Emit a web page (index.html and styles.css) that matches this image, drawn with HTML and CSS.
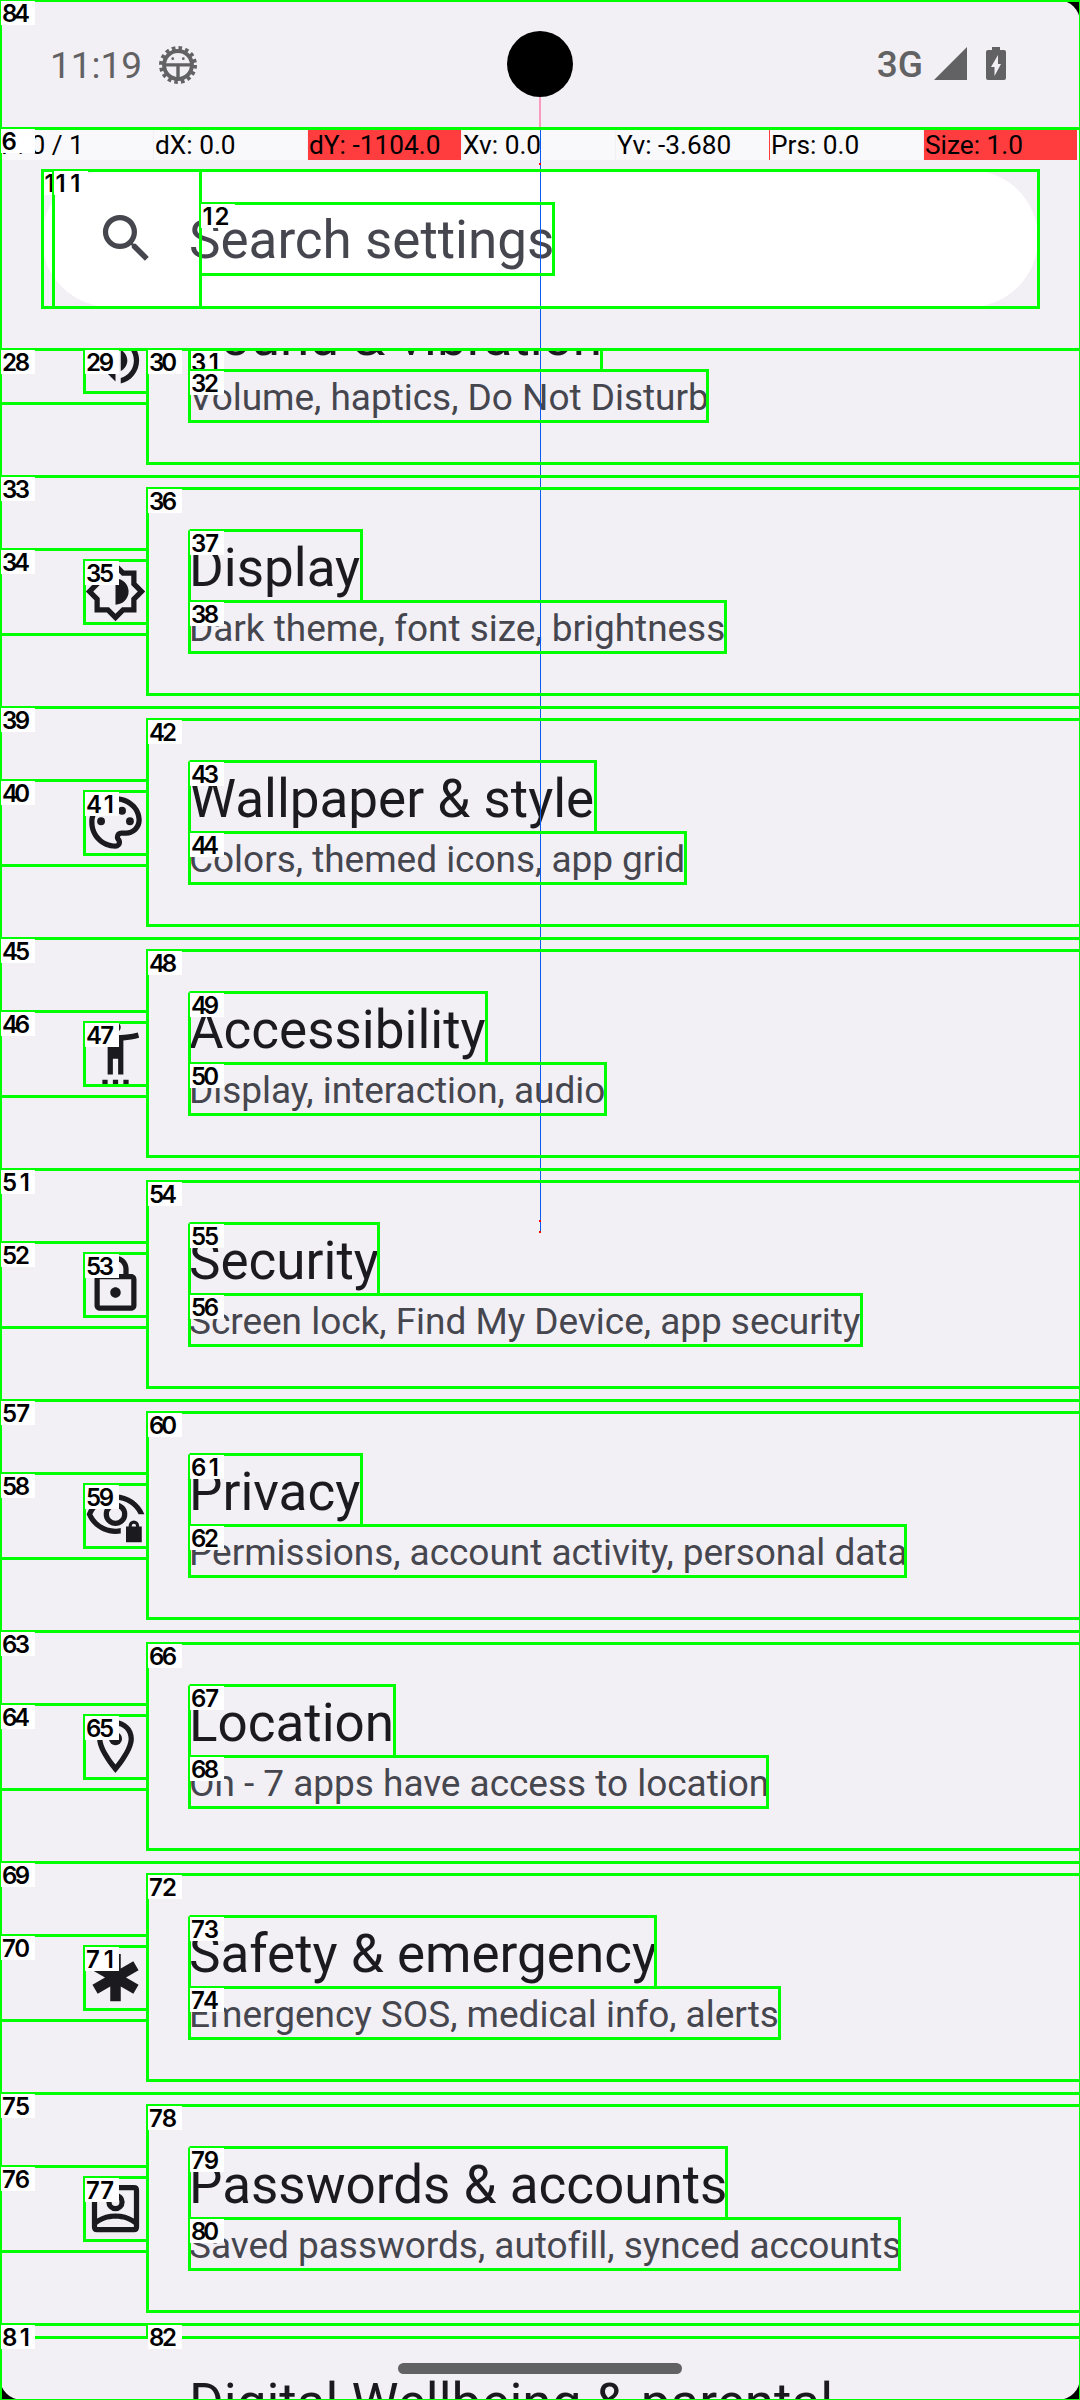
FILE: index.html
```html
<!DOCTYPE html>
<html lang="en">
<head>
<meta charset="utf-8">
<title>Settings</title>
<link rel="stylesheet" href="styles.css">
</head>
<body>
<div class="screen">
  <header class="status">
    <div class="status-left">
      <span class="clock">11:19</span>
      <svg class="bug" viewBox="-18 -18 36 36">
        <circle r="13.2" fill="none" stroke="#626264" stroke-width="3.8"/>
        <circle r="16.2" fill="none" stroke="#626264" stroke-width="3.6" stroke-dasharray="3.4 2.96"/>
        <path d="M-13-1.6h26v3h-11.4v12h-3.2v-12H-13z" fill="#626264"/>
        <circle cx="-5" cy="-6" r="1.3" fill="#626264"/><circle cx="5" cy="-6" r="1.3" fill="#626264"/>
      </svg>
    </div>
    <div class="status-right">
      <span class="network">3G</span>
      <svg class="signal" viewBox="0 0 33 33"><path d="M33 0v33H0z"/></svg>
      <svg class="battery" viewBox="0 0 20 33"><path fill-rule="evenodd" d="M6 0h8v3h4q2 0 2 2v26q0 2-2 2H2q-2 0-2-2V5q0-2 2-2h4zM12 8L5 20h3.5v9L15 17h-3z"/></svg>
    </div>
  </header>

  <div class="pointer-bar">
    <span>P: 0 / 1</span><span>dX: 0.0</span><span class="hot">dY: -1104.0</span><span>Xv: 0.0</span><span>Yv: -3.680</span><span class="edge">Prs: 0.0</span><span class="hot">Size: 1.0</span>
  </div>

  <div class="search">
    <svg class="icon" viewBox="0 0 24 24"><path d="M15.5 14h-.79l-.28-.27A6.47 6.47 0 0016 9.5 6.5 6.5 0 109.5 16c1.61 0 3.09-.59 4.23-1.57l.27.28v.79l5 4.99L20.49 19l-4.99-5zm-6 0C7.01 14 5 11.99 5 9.5S7.01 5 9.5 5 14 7.01 14 9.5 11.99 14 9.5 14z"/></svg>
    <span class="hint">Search settings</span>
  </div>

  <main class="list">
    <div class="row">
      <svg class="icon" viewBox="0 0 24 24"><path d="M3 9v6h4l5 5V4L7 9H3zm7-.17v6.34L7.83 13H5v-2h2.83L10 8.83zM16.5 12c0-1.77-1.02-3.29-2.5-4.03v8.05c1.48-.73 2.5-2.25 2.5-4.02zM14 3.23v2.06c2.89.86 5 3.54 5 6.71s-2.11 5.85-5 6.71v2.06c4.01-.91 7-4.49 7-8.77s-2.99-7.86-7-8.77z"/></svg>
      <div class="text"><div class="title">Sound &amp; vibration</div><div class="summary">Volume, haptics, Do Not Disturb</div></div>
    </div>
    <div class="row">
      <svg class="icon" viewBox="0 0 24 24"><path d="M20 8.69V4h-4.69L12 .69 8.69 4H4v4.69L.69 12 4 15.31V20h4.69L12 23.31 15.31 20H20v-4.69L23.31 12 20 8.69zm-2 5.79V18h-3.52L12 20.48 9.52 18H6v-3.52L3.52 12 6 9.52V6h3.52L12 3.52 14.48 6H18v3.52L20.48 12 18 14.48zM12 7v10c2.76 0 5-2.24 5-5s-2.24-5-5-5z"/></svg>
      <div class="text"><div class="title">Display</div><div class="summary">Dark theme, font size, brightness</div></div>
    </div>
    <div class="row">
      <svg class="icon" viewBox="0 0 24 24"><path d="M12 22C6.49 22 2 17.51 2 12S6.49 2 12 2s10 4.04 10 9c0 3.31-2.69 6-6 6h-1.77c-.28 0-.5.22-.5.5 0 .12.05.23.13.33.41.47.64 1.06.64 1.67A2.5 2.5 0 0112 22zm0-18c-4.41 0-8 3.59-8 8s3.59 8 8 8c.28 0 .5-.22.5-.5a.54.54 0 00-.14-.35c-.41-.46-.63-1.05-.63-1.65a2.5 2.5 0 012.5-2.5H16c2.21 0 4-1.79 4-4 0-3.86-3.59-7-8-7z"/><circle cx="6.5" cy="11.5" r="1.5"/><circle cx="9.5" cy="7.5" r="1.5"/><circle cx="14.5" cy="7.5" r="1.5"/><circle cx="17.5" cy="11.5" r="1.5"/></svg>
      <div class="text"><div class="title">Wallpaper &amp; style</div><div class="summary">Colors, themed icons, app grid</div></div>
    </div>
    <div class="row">
      <svg class="icon" viewBox="0 0 24 24"><path d="M20.5 4c-2.61.7-5.67 1-8.5 1s-5.89-.3-8.5-1L3 6c1.86.5 4 .83 6 1v13h2v-6h2v6h2V7c2-.17 4.14-.5 6-1l-.5-2zM12 4a2 2 0 100-4 2 2 0 000 4zM7 22h2v2H7zM11 22h2v2h-2zM15 22h2v2h-2z"/></svg>
      <div class="text"><div class="title">Accessibility</div><div class="summary">Display, interaction, audio</div></div>
    </div>
    <div class="row">
      <svg class="icon" viewBox="0 0 24 24"><path d="M18 8h-1V6c0-2.76-2.24-5-5-5S7 3.24 7 6v2H6c-1.1 0-2 .9-2 2v10c0 1.1.9 2 2 2h12c1.1 0 2-.9 2-2V10c0-1.1-.9-2-2-2zM9 6c0-1.66 1.34-3 3-3s3 1.34 3 3v2H9V6zm9 14H6V10h12v10zm-6-3c1.1 0 2-.9 2-2s-.9-2-2-2-2 .9-2 2 .9 2 2 2z"/></svg>
      <div class="text"><div class="title">Security</div><div class="summary">Screen lock, Find My Device, app security</div></div>
    </div>
    <div class="row">
      <svg class="icon" viewBox="0 0 24 24"><path fill-rule="evenodd" d="M12 4C7 4 2.73 7.11 1 11.5 2.73 15.89 7 19 12 19c.7 0 1.37-.06 2-.18v-2.02c-.64.13-1.3.2-2 .2-3.79 0-7.17-2.13-8.82-5.5C4.83 8.13 8.21 6 12 6s7.17 2.13 8.82 5.5H23C21.27 7.11 17 4 12 4zM12 7a4.5 4.5 0 100 9 4.5 4.5 0 000-9zm0 2a2.5 2.5 0 110 5 2.5 2.5 0 010-5zM16 16.2h1V16a2 2.1 0 014 0v.2h1v6h-6zm2.2 0h1.6V16a.8.9 0 00-1.6 0z"/></svg>
      <div class="text"><div class="title">Privacy</div><div class="summary">Permissions, account activity, personal data</div></div>
    </div>
    <div class="row">
      <svg class="icon" viewBox="0 0 24 24"><path d="M12 2C8.13 2 5 5.13 5 9c0 5.25 7 13 7 13s7-7.75 7-13c0-3.87-3.13-7-7-7zM7 9c0-2.76 2.24-5 5-5s5 2.24 5 5c0 2.88-2.88 7.19-5 9.88C9.92 16.21 7 11.85 7 9z"/><circle cx="12" cy="9" r="2.5"/></svg>
      <div class="text"><div class="title">Location</div><div class="summary">On - 7 apps have access to location</div></div>
    </div>
    <div class="row">
      <svg class="icon" viewBox="0 0 24 24"><path d="M20.79 9.23l-2-3.46L14 8.54V3h-4v5.54L5.21 5.77l-2 3.46L8 12l-4.79 2.77 2 3.46L10 15.46V21h4v-5.54l4.79 2.77 2-3.46L16 12z"/></svg>
      <div class="text"><div class="title">Safety &amp; emergency</div><div class="summary">Emergency SOS, medical info, alerts</div></div>
    </div>
    <div class="row">
      <svg class="icon" viewBox="0 0 24 24"><path fill-rule="evenodd" d="M5 3h14q2 0 2 2v14q0 2-2 2H5q-2 0-2-2V5q0-2 2-2zM5 5v10.8c1.9-1.2 4.3-1.9 7-1.9s5.1.7 7 1.9V5zM5 18.2v.8h14v-.8c-1.7-1.5-4.2-2.3-7-2.3s-5.3.8-7 2.3zM12 6a3.5 3.5 0 100 7 3.5 3.5 0 000-7zm0 2a1.5 1.5 0 110 3 1.5 1.5 0 010-3z"/></svg>
      <div class="text"><div class="title">Passwords &amp; accounts</div><div class="summary">Saved passwords, autofill, synced accounts</div></div>
    </div>
    <div class="row tall">
      <div class="text"><div class="title">Digital Wellbeing &amp; parental</div></div>
    </div>
  </main>

  <svg class="overlay" viewBox="0 0 1080 2400">
    <defs>
      <path id="frame" d="M0 .5H1080M1080 12.5H147.500V218.500H1080M0 73.500H147.500M0 158.500H147.500M147.500 84.500H84.500V147.500H147.500"/>
      <rect id="tag" width="34" height="24"/>
    </defs>

    <!-- display corners, camera, gesture handle, touch trail -->
    <path d="M0 0h22A22 22 0 000 22zM1080 0v22A22 22 0 001058 0zM0 2400v-22A22 22 0 0022 2400zM1080 2400h-22A22 22 0 001080 2378z"/>
    <rect x="398" y="2363" width="284" height="11" rx="5.500" fill="#626264"/>
    <path d="M539 97h2v32h-2z" fill="#fa9bbd"/>
    <path d="M540 129h1v1103h-1z" fill="#0a5cf0"/>
    <path d="M539 163h2v2h-2zM539 1220h2v2h-2zM539 1231h2v2h-2z" fill="#f00"/>
    <circle cx="540" cy="64" r="33"/>

    <g class="tags">
      <use href="#tag" x="43" y="171"/><text x="44.500" y="192">1</text>
      <use href="#tag" x="190" y="350"/><text x="191" y="371" textLength="28">31</text>
    </g>

    <g class="boxes">
      <path d="M.5 0V2400M0 .5H1080M1080.500 0V2400M0 2400.500H1080M0 128.500H1080M0 349.500H1080"/>
      <path d="M42.500 170.500H1038.500V307.500H42.500zM53.500 170.500V307.500M200.500 170.500V307.500M200.500 203.500H553.500V274.500H200.500"/>
      <path d="M84.500 349.500V392.500H147.500M0 403.500H147.500M147.500 349.500V463.500H1080"/>
      <path d="M189.500 349.500V421.500H707.500V370.500H189.500M601.500 349.500V370.500"/>
      <use href="#frame" y="476"/><use href="#frame" y="707"/><use href="#frame" y="938"/><use href="#frame" y="1169"/>
      <use href="#frame" y="1400"/><use href="#frame" y="1631"/><use href="#frame" y="1862"/><use href="#frame" y="2093"/>
      <path d="M189.500 530.500H361.500V601.500M189.500 530.500V652.500H725.500V601.500H189.500"/>
      <path d="M189.500 761.500H595.500V832.500M189.500 761.500V883.500H685.500V832.500H189.500"/>
      <path d="M189.500 992.500H486.500V1063.500M189.500 992.500V1114.500H605.500V1063.500H189.500"/>
      <path d="M189.500 1223.500H378.500V1294.500M189.500 1223.500V1345.500H861.500V1294.500H189.500"/>
      <path d="M189.500 1454.500H361.500V1525.500M189.500 1454.500V1576.500H905.500V1525.500H189.500"/>
      <path d="M189.500 1685.500H394.500V1756.500M189.500 1685.500V1807.500H767.500V1756.500H189.500"/>
      <path d="M189.500 1916.500H655.500V1987.500M189.500 1916.500V2038.500H779.500V1987.500H189.500"/>
      <path d="M189.500 2147.500H726.500V2218.500M189.500 2147.500V2269.500H899.500V2218.500H189.500"/>
      <path d="M0 2324.500H1080M0 2337.500H1080M147.500 2324.500V2337.500"/>
    </g>

    <g class="tags">
      <use href="#tag" x="1" y="1"/><text x="2" y="22" textLength="28">84</text>
      <use href="#tag" x="1" y="129"/><text x="1.500" y="150">6</text>
      <use href="#tag" x="54" y="171"/><text x="55.500" y="192" textLength="25">11</text>
      <use href="#tag" x="201" y="204"/><text x="202.500" y="225" textLength="27">12</text>
      <use href="#tag" x="1" y="350"/><text x="2" y="371" textLength="28">28</text>
      <use href="#tag" x="85" y="350"/><text x="86" y="371" textLength="28">29</text>
      <use href="#tag" x="148" y="350"/><text x="149" y="371" textLength="28">30</text>
      <use href="#tag" x="190" y="371"/><text x="191" y="392" textLength="28">32</text>

      <use href="#tag" x="1" y="477"/><text x="2" y="498" textLength="28">33</text>
      <use href="#tag" x="1" y="550"/><text x="2" y="571" textLength="28">34</text>
      <use href="#tag" x="85" y="561"/><text x="86" y="582" textLength="28">35</text>
      <use href="#tag" x="148" y="489"/><text x="149" y="510" textLength="28">36</text>
      <use href="#tag" x="190" y="531"/><text x="191" y="552" textLength="28">37</text>
      <use href="#tag" x="190" y="602"/><text x="191" y="623" textLength="28">38</text>

      <use href="#tag" x="1" y="708"/><text x="2" y="729" textLength="28">39</text>
      <use href="#tag" x="1" y="781"/><text x="2" y="802" textLength="28">40</text>
      <use href="#tag" x="85" y="792"/><text x="86" y="813" textLength="28">41</text>
      <use href="#tag" x="148" y="720"/><text x="149" y="741" textLength="28">42</text>
      <use href="#tag" x="190" y="762"/><text x="191" y="783" textLength="28">43</text>
      <use href="#tag" x="190" y="833"/><text x="191" y="854" textLength="28">44</text>

      <use href="#tag" x="1" y="939"/><text x="2" y="960" textLength="28">45</text>
      <use href="#tag" x="1" y="1012"/><text x="2" y="1033" textLength="28">46</text>
      <use href="#tag" x="85" y="1023"/><text x="86" y="1044" textLength="28">47</text>
      <use href="#tag" x="148" y="951"/><text x="149" y="972" textLength="28">48</text>
      <use href="#tag" x="190" y="993"/><text x="191" y="1014" textLength="28">49</text>
      <use href="#tag" x="190" y="1064"/><text x="191" y="1085" textLength="28">50</text>

      <use href="#tag" x="1" y="1170"/><text x="2" y="1191" textLength="28">51</text>
      <use href="#tag" x="1" y="1243"/><text x="2" y="1264" textLength="28">52</text>
      <use href="#tag" x="85" y="1254"/><text x="86" y="1275" textLength="28">53</text>
      <use href="#tag" x="148" y="1182"/><text x="149" y="1203" textLength="28">54</text>
      <use href="#tag" x="190" y="1224"/><text x="191" y="1245" textLength="28">55</text>
      <use href="#tag" x="190" y="1295"/><text x="191" y="1316" textLength="28">56</text>

      <use href="#tag" x="1" y="1401"/><text x="2" y="1422" textLength="28">57</text>
      <use href="#tag" x="1" y="1474"/><text x="2" y="1495" textLength="28">58</text>
      <use href="#tag" x="85" y="1485"/><text x="86" y="1506" textLength="28">59</text>
      <use href="#tag" x="148" y="1413"/><text x="149" y="1434" textLength="28">60</text>
      <use href="#tag" x="190" y="1455"/><text x="191" y="1476" textLength="28">61</text>
      <use href="#tag" x="190" y="1526"/><text x="191" y="1547" textLength="28">62</text>

      <use href="#tag" x="1" y="1632"/><text x="2" y="1653" textLength="28">63</text>
      <use href="#tag" x="1" y="1705"/><text x="2" y="1726" textLength="28">64</text>
      <use href="#tag" x="85" y="1716"/><text x="86" y="1737" textLength="28">65</text>
      <use href="#tag" x="148" y="1644"/><text x="149" y="1665" textLength="28">66</text>
      <use href="#tag" x="190" y="1686"/><text x="191" y="1707" textLength="28">67</text>
      <use href="#tag" x="190" y="1757"/><text x="191" y="1778" textLength="28">68</text>

      <use href="#tag" x="1" y="1863"/><text x="2" y="1884" textLength="28">69</text>
      <use href="#tag" x="1" y="1936"/><text x="2" y="1957" textLength="28">70</text>
      <use href="#tag" x="85" y="1947"/><text x="86" y="1968" textLength="28">71</text>
      <use href="#tag" x="148" y="1875"/><text x="149" y="1896" textLength="28">72</text>
      <use href="#tag" x="190" y="1917"/><text x="191" y="1938" textLength="28">73</text>
      <use href="#tag" x="190" y="1988"/><text x="191" y="2009" textLength="28">74</text>

      <use href="#tag" x="1" y="2094"/><text x="2" y="2115" textLength="28">75</text>
      <use href="#tag" x="1" y="2167"/><text x="2" y="2188" textLength="28">76</text>
      <use href="#tag" x="85" y="2178"/><text x="86" y="2199" textLength="28">77</text>
      <use href="#tag" x="148" y="2106"/><text x="149" y="2127" textLength="28">78</text>
      <use href="#tag" x="190" y="2148"/><text x="191" y="2169" textLength="28">79</text>
      <use href="#tag" x="190" y="2219"/><text x="191" y="2240" textLength="28">80</text>

      <use href="#tag" x="1" y="2325"/><text x="2" y="2346" textLength="28">81</text>
      <use href="#tag" x="148" y="2325"/><text x="149" y="2346" textLength="28">82</text>
    </g>
  </svg>
</div>
</body>
</html>
```
FILE: styles.css
```css
* { box-sizing: border-box; }
body { margin: 0; }
.screen {
  position: relative;
  width: 1080px;
  height: 2400px;
  overflow: hidden;
  display: flex;
  flex-direction: column;
  background: #f2f0f5;
  color: #1b1b1f;
  font-family: Roboto, sans-serif;
}
.status {
  flex: none;
  height: 130px;
  padding: 0 74px 0 50px;
  display: flex;
  justify-content: space-between;
  align-items: center;
  color: #626264;
  font-size: 37px;
}
.status-left, .status-right { display: flex; align-items: center; }
.clock { line-height: 44px; margin-top: 2px; }
.bug { width: 38px; height: 38px; margin-left: 17px; }
.network { font-weight: 500; line-height: 44px; }
.signal { width: 33px; height: 33px; margin: 0 19px 3px 11px; fill: #626264; }
.battery { width: 20px; height: 33px; margin-bottom: 3px; fill: #626264; }

.pointer-bar {
  flex: none;
  display: flex;
  gap: 1px;
  height: 30px;
  font-size: 26.25px;
  line-height: 30px;
  color: #000;
}
.pointer-bar span { width: 153px; padding-left: 1px; background: #f9f9fc; white-space: nowrap; }
.pointer-bar .hot { background: #ff3d3f; }
.pointer-bar .edge { box-shadow: -1px 0 #ff3d3f; }

.search {
  flex: none;
  display: flex;
  align-items: center;
  width: 996px;
  height: 137px;
  margin: 10px 0 42px 42px;
  padding-left: 53px;
  gap: 31px;
  border-radius: 69px;
  background: #fff;
  color: #46464f;
  font-size: 53px;
}
.hint { padding-top: 2px; white-space: nowrap; }
.icon { flex: none; width: 63px; height: 63px; fill: currentColor; }

.list { flex: 1; min-height: 0; overflow: hidden; }
.row { display: flex; align-items: center; height: 231px; padding-left: 84px; gap: 42px; }
.row:first-child { margin-top: -104px; }
.text { white-space: nowrap; }
.title { height: 71px; line-height: 74px; font-size: 53px; }
.summary { height: 51px; line-height: 54px; font-size: 37px; letter-spacing: -0.03px; color: #46464f; }
.tall { align-items: flex-start; padding: 42px 0 0 189px; }

.overlay { position: absolute; left: 0; top: 0; width: 1080px; height: 2400px; }
.boxes { fill: none; stroke: #0f0; stroke-width: 3px; }
.tags { fill: #fff; }
.tags text { fill: #000; font: 600 24px Inter, sans-serif; }
```
